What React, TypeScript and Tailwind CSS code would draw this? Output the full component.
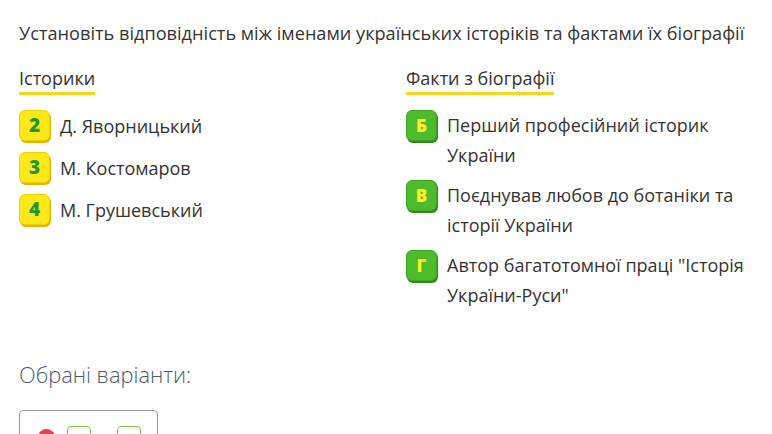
import React from "react";

const historians = [
    { id: "2", name: "Д. Яворницький" },
    { id: "3", name: "М. Костомаров" },
    { id: "4", name: "М. Грушевський" },
];

const facts = [
    { id: "Б", text: "Перший професійний історик України" },
    { id: "В", text: "Поєднував любов до ботаніки та історії України" },
    { id: "Г", text: 'Автор багатотомної праці "Історія України-Руси"' },
];

function NumBadge({ label }: { label: string }) {
    return (
        <div className="w-[31px] h-[31px] shrink-0 rounded-[6px] bg-[#ffe81a] border border-[#f2cf00] shadow-[1px_2px_0_#d9b800] flex items-center justify-center text-[#1f9a32] text-[19px] font-extrabold leading-none">
            {label}
        </div>
    );
}

function LetterBadge({ label }: { label: string }) {
    return (
        <div className="w-[31px] h-[31px] shrink-0 rounded-[6px] bg-[#4cbb2c] border border-[#3fa524] shadow-[1px_2px_0_#2f8a1a] flex items-center justify-center text-[#ffef2a] text-[17px] font-extrabold leading-none">
            {label}
        </div>
    );
}

export default function App() {
    return (
        <div className="w-[772px] h-[434px] overflow-hidden bg-white text-[#333] font-['Open_Sans',sans-serif]">
            <div className="px-[19px] pt-[19px]">
                <p className="text-[18.15px] leading-[28px] tracking-[0.01px]">
                    Установіть відповідність між іменами українських історіків та фактами їх біографії
                </p>

                <div className="flex mt-[18px]">
                    {/* Left column */}
                    <div className="w-[387px]">
                        <h3 className="inline-block text-[18px] leading-[26px] border-b-[3px] border-[#fbd318] pb-[1px]">
                            Історики
                        </h3>
                        <div className="flex flex-col gap-[11px] mt-[15px]">
                            {historians.map((h) => (
                                <div key={h.id} className="flex items-center gap-[10px]">
                                    <NumBadge label={h.id} />
                                    <span className="text-[18px] leading-[30px]">{h.name}</span>
                                </div>
                            ))}
                        </div>
                    </div>

                    {/* Right column */}
                    <div className="flex-1">
                        <h3 className="inline-block text-[18px] leading-[26px] border-b-[3px] border-[#fbd318] pb-[1px]">
                            Факти з біографії
                        </h3>
                        <div className="flex flex-col gap-[10px] mt-[15px]">
                            {facts.map((f) => (
                                <div key={f.id} className="flex items-start gap-[10px]">
                                    <LetterBadge label={f.id} />
                                    <span className="text-[18px] leading-[30px] max-w-[310px]">{f.text}</span>
                                </div>
                            ))}
                        </div>
                    </div>
                </div>

                <p className="mt-[51px] text-[21.8px] leading-[28px] font-light text-[#4b5a6b]">Обрані варіанти:</p>

                <div className="mt-[21px] w-[139px] h-[60px] border border-[#9a9a9a] rounded-[4px] flex items-start pl-[18px] pt-[15px]">
                    <div className="w-[17px] h-[17px] rounded-full bg-[#e0424f] mt-[3px]" />
                    <div className="w-[24px] h-[24px] rounded-[4px] border border-[#7cc24a] ml-[12px]" />
                    <div className="w-[24px] h-[24px] rounded-[4px] border border-[#7cc24a] ml-[26px]" />
                </div>
            </div>
        </div>
    );
}
